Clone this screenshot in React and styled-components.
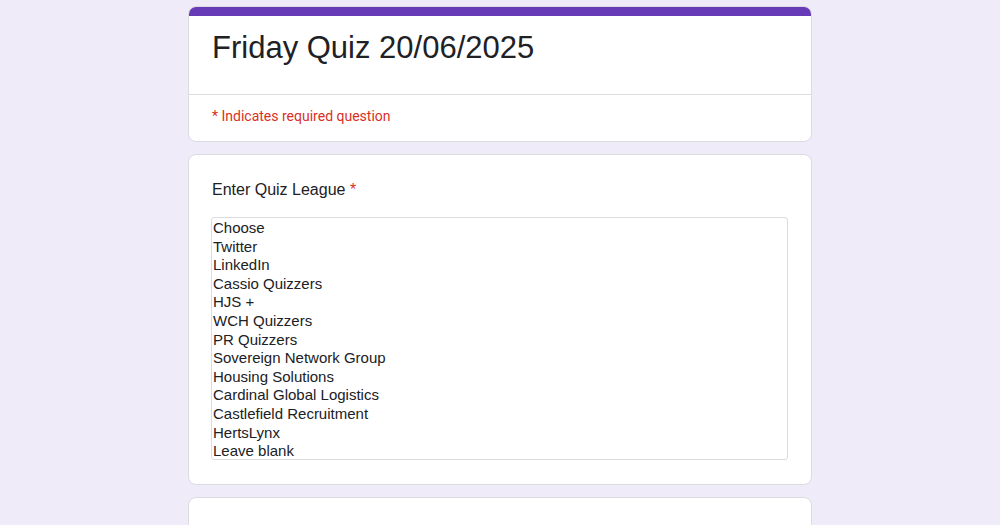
import React from 'react';
import styled, { createGlobalStyle } from 'styled-components';

const GlobalStyle = createGlobalStyle`
  html, body {
    margin: 0;
    padding: 0;
    background: #f0ebf8;
  }
  body {
    font-family: "Liberation Sans", Arial, sans-serif;
    color: #202124;
  }
`;

const Page = styled.div`
  width: 624px;
  margin: 0 auto;
  padding-top: 6px;
  display: flex;
  flex-direction: column;
  gap: 12px;
`;

const Card = styled.div`
  background: #fff;
  border: 1px solid #dadce0;
  border-radius: 8px;
  box-sizing: border-box;
  overflow: hidden;
  min-height: ${({ minHeight }) => minHeight || 'auto'};
`;

const TopBar = styled.div`
  height: 10px;
  background: #673ab7;
  margin: -1px -1px 0;
`;

const TitleBlock = styled.div`
  padding: 12px 24px 0 23px;
  height: 79px;
  box-sizing: border-box;
  border-bottom: 1px solid #dadce0;
`;

const Title = styled.h1`
  margin: 0;
  font-family: "Liberation Sans", Arial, sans-serif;
  font-weight: 400;
  font-size: 31px;
  line-height: 40px;
  color: #202124;
`;

const Required = styled.div`
  padding: 12px 24px 16px 23px;
  font-family: Roboto, "Liberation Sans", sans-serif;
  font-size: 14px;
  line-height: 18px;
  color: #d93025;
`;

const Question = styled.div`
  padding: 23px 23px 24px 22px;
`;

const Label = styled.div`
  font-size: 16px;
  line-height: 24px;
  margin-bottom: 15px;
  padding-left: 1px;
  color: #202124;
`;

const Star = styled.span`
  color: #d93025;
`;

const ListBox = styled.div`
  border: 1px solid #dadce0;
  border-radius: 3px;
  padding: 1px 1px 0;
  height: 243px;
  box-sizing: border-box;
  overflow: hidden;
`;

const Option = styled.div`
  font-family: "Liberation Sans", Arial, sans-serif;
  font-size: 15px;
  line-height: 18.6px;
  color: #202124;
  white-space: nowrap;
`;

const options = [
  'Choose',
  'Twitter',
  'LinkedIn',
  'Cassio Quizzers',
  'HJS +',
  'WCH Quizzers',
  'PR Quizzers',
  'Sovereign Network Group',
  'Housing Solutions',
  'Cardinal Global Logistics',
  'Castlefield Recruitment',
  'HertsLynx',
  'Leave blank',
];

const App = () => (
  <>
    <GlobalStyle />
    <Page>
      <Card>
        <TopBar />
        <TitleBlock>
          <Title>Friday Quiz 20/06/2025</Title>
        </TitleBlock>
        <Required>* Indicates required question</Required>
      </Card>
      <Card>
        <Question>
          <Label>
            Enter Quiz League <Star>*</Star>
          </Label>
          <ListBox>
            {options.map((o) => (
              <Option key={o}>{o}</Option>
            ))}
          </ListBox>
        </Question>
      </Card>
      <Card minHeight="60px" />
    </Page>
  </>
);

export default App;
